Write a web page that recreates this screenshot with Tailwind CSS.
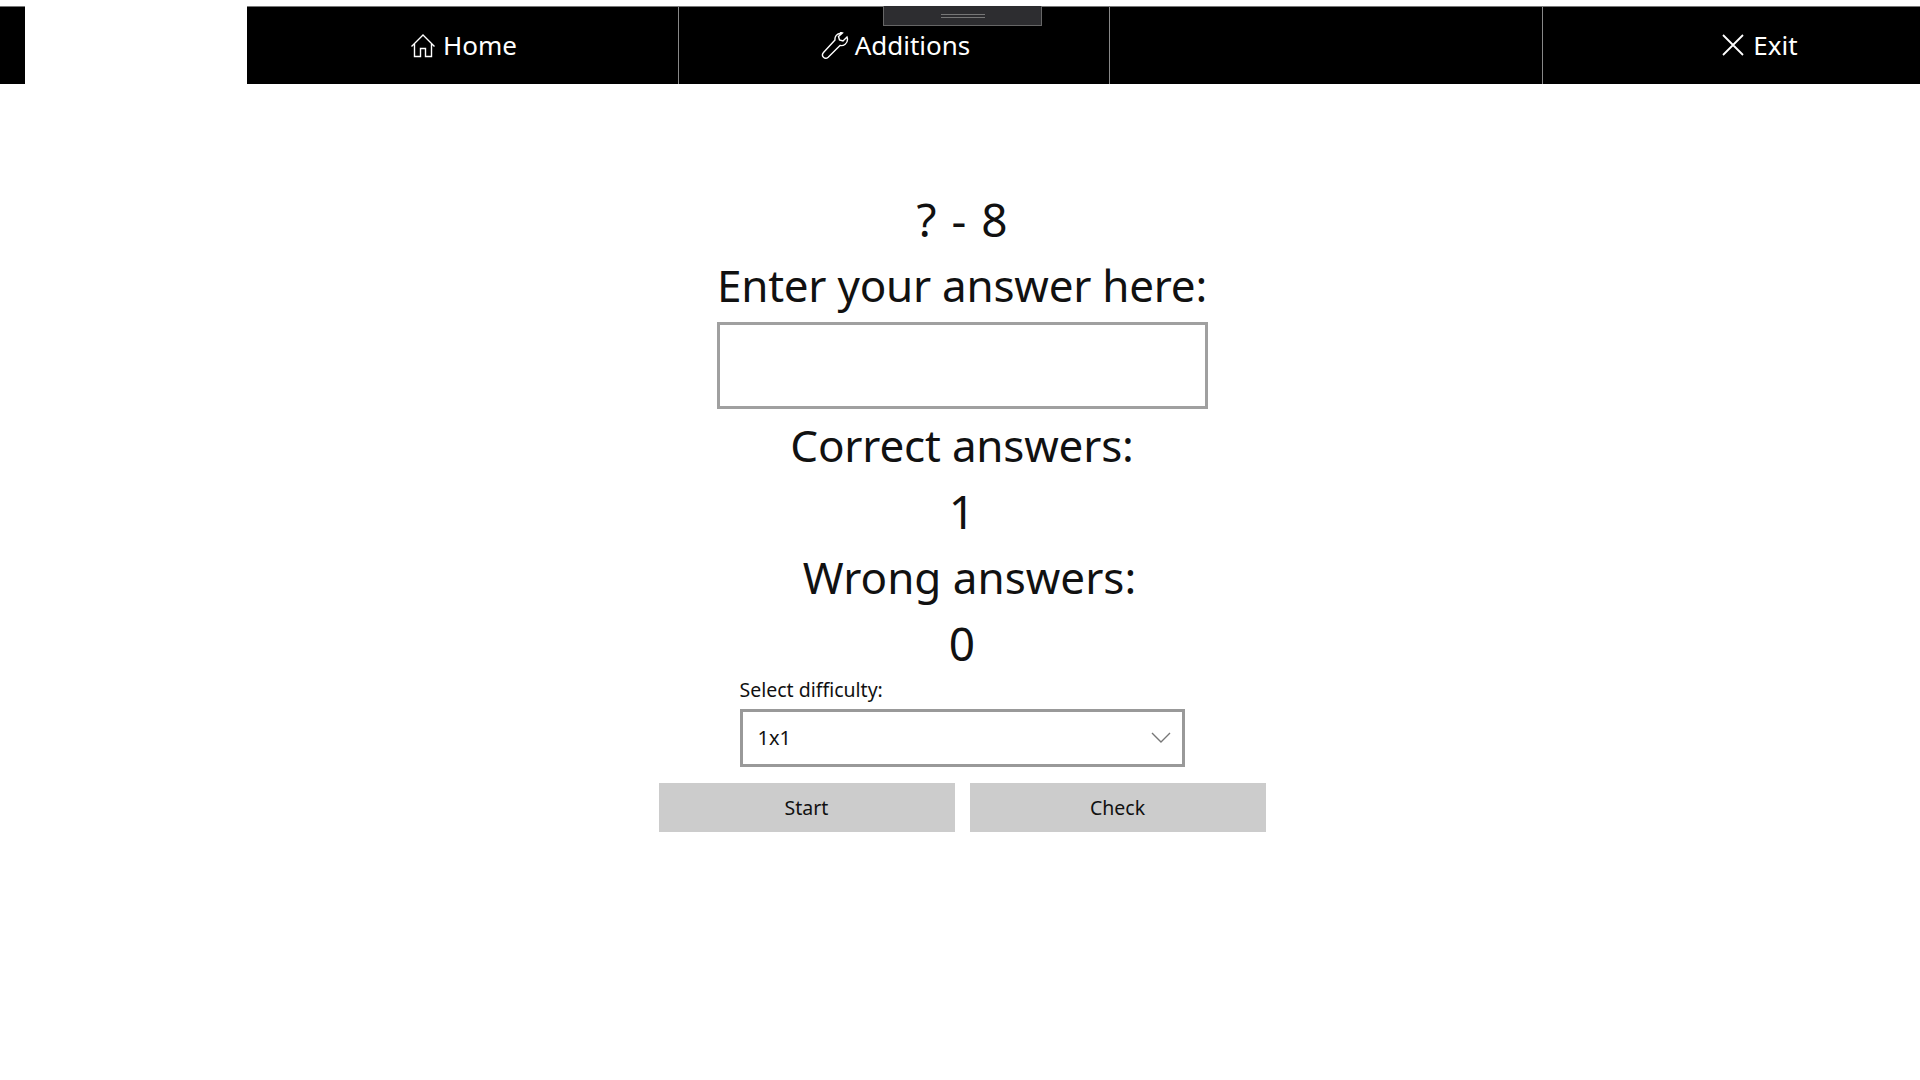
<!DOCTYPE html>
<html lang="en">
<head>
    <meta charset="UTF-8">
    <title>Quiz</title>
    <script src="https://cdn.jsdelivr.net/npm/@tailwindcss/browser@4"></script>
</head>
<body class="bg-white min-h-screen overflow-hidden font-['Noto_Sans',sans-serif] text-[#111]">
    <!-- top bar -->
    <header class="relative pt-[6px] flex h-[84px]">
        <div class="w-[25px] bg-black border-t border-[#777]"></div>
        <nav class="ml-[222px] flex-1 flex bg-black text-white text-[26px] border-t border-[#777]">
            <a class="w-[432px] flex items-center justify-center gap-[7px] pl-[2px] border-r border-[#888]">
                <svg class="w-[26px] h-[26px]" viewBox="0 0 26 26" fill="none" stroke="currentColor" stroke-width="1.4">
                    <path d="M1.500 13.500 13 2l11.500 11.500M4.500 11v12.500h6V15.500h5v8h6V11" />
                </svg>
                Home
            </a>
            <a class="w-[431px] flex items-center justify-center gap-[6px] pl-[3px] border-r border-[#888]">
                <svg class="w-[28px] h-[28px]" viewBox="0 0 28 28" fill="none" stroke="currentColor" stroke-width="1.4">
                    <path d="M19.500 1.500c-3.500 0-6 2.800-5.500 6.500L2.500 20.500c-1.500 1.700-1 3.700 0 4.700 1.200 1.200 3.200 1.300 4.700 0L19 13.500c3.800.700 7.500-2 7.500-6 0-1-.2-1.700-.5-2.500l-4 4-3.500-1-1-3.500 4-3.500c-.7-.3-1.300-.5-2-.5z" />
                </svg>
                Additions
            </a>
            <a class="w-[433px] border-r border-[#888]"></a>
            <a class="flex-1 flex items-center justify-center gap-[8px] pl-[56px]">
                <svg class="w-[24px] h-[24px] -translate-y-[1px]" viewBox="0 0 24 24" fill="none" stroke="currentColor" stroke-width="1.8">
                    <path d="M2 2l20 20M22 2 2 22" />
                </svg>
                Exit
            </a>
        </nav>
        <!-- drag handle -->
        <div class="absolute left-[883px] top-[6px] w-[159px] h-[20px] bg-[#2d2d30] border border-t-0 border-[#666] flex flex-col items-center justify-center gap-[2px]">
            <span class="w-[44px] h-px bg-[#777]"></span>
            <span class="w-[44px] h-px bg-[#777]"></span>
        </div>
    </header>

    <main class="flex flex-col items-center pt-[102px] pl-[4px]">
        <div class="h-[66px] flex items-center text-[46px] [word-spacing:3px]">? - 8</div>
        <div class="h-[66px] flex items-center text-[44px] tracking-[-0.25px]">Enter your answer here:</div>
        <div class="mt-[4px] w-[491px] h-[87px] border-[3px] border-[#a0a0a0] bg-white"></div>
        <div class="mt-[3px] h-[66px] flex items-center text-[44px] tracking-[-0.2px]">Correct answers:</div>
        <div class="h-[66px] flex items-center text-[46px]">1</div>
        <div class="ml-[15px] h-[66px] flex items-center text-[44px]">Wrong answers:</div>
        <div class="h-[66px] flex items-center text-[46px]">0</div>

        <div class="mt-[1px] w-[445px]">
            <div class="text-[19.5px] leading-[26px] mb-[6px]">Select difficulty:</div>
            <div class="h-[58px] border-[3px] border-[#999] flex items-center justify-between pl-[15px] pr-[11px] text-[20px]">
                1x1
                <svg class="w-[20px] h-[12px] text-[#777]" viewBox="0 0 20 12" fill="none" stroke="currentColor" stroke-width="1.4">
                    <path d="M1 1l9 9 9-9" />
                </svg>
            </div>
        </div>

        <div class="mt-[16px] flex gap-[15px]">
            <button class="w-[296px] h-[49px] bg-[#ccc] text-[19.5px]">Start</button>
            <button class="w-[296px] h-[49px] bg-[#ccc] text-[19.5px]">Check</button>
        </div>
    </main>
</body>
</html>
